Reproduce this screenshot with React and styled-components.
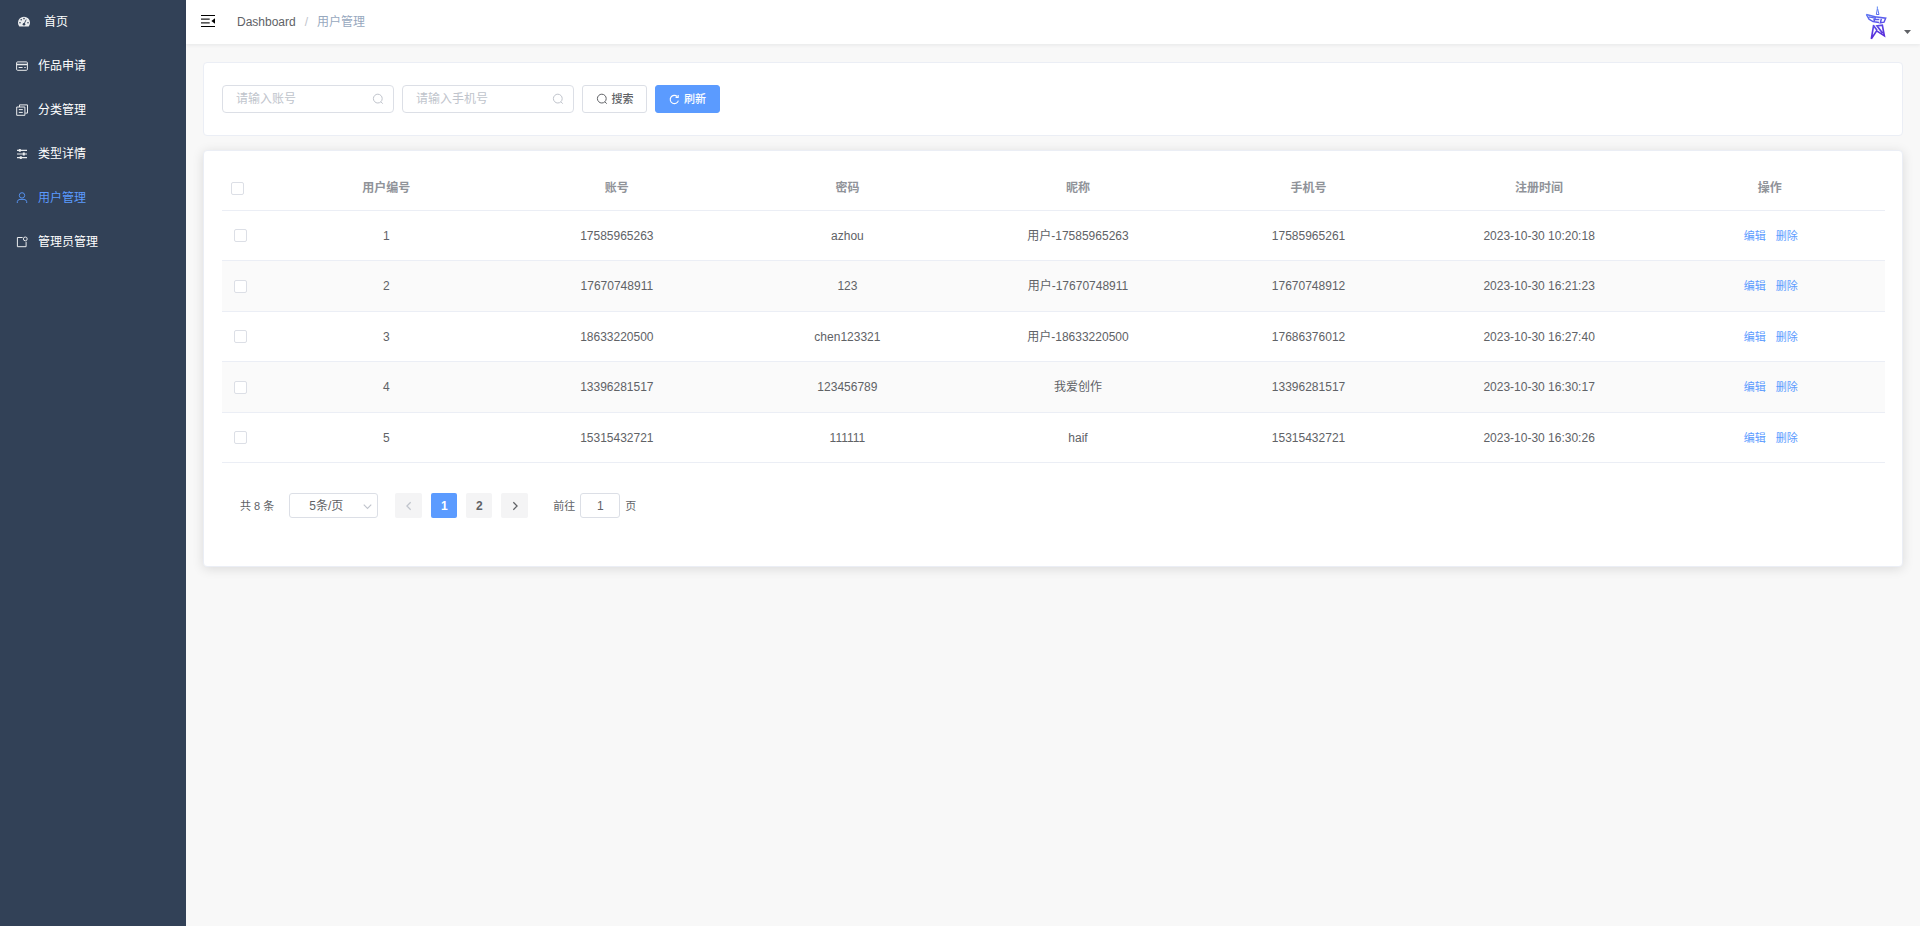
import React, { useState } from 'react';
import styled, { createGlobalStyle, css } from 'styled-components';

const GlobalStyle = createGlobalStyle`
  * {
    box-sizing: border-box;
  }
  body {
    margin: 0;
    background: #f8f8f8;
    color: #606266;
    font-family: 'Liberation Sans', 'Noto Sans CJK SC', sans-serif;
    font-size: 12px;
    line-height: 16px;
  }
  button, input, select {
    font-family: inherit;
    line-height: inherit;
  }
`;

const Layout = styled.div`
  display: flex;
  min-height: 100vh;
`;

const Sidebar = styled.nav`
  flex: none;
  width: 186px;
  background: #324157;
`;

const MenuItem = styled.a`
  display: flex;
  align-items: center;
  gap: ${({ $home }) => ($home ? '14px' : '10px')};
  height: 44px;
  padding-left: ${({ $home }) => ($home ? '18px' : '16px')};
  color: ${({ $active }) => ($active ? '#5b9bff' : '#fff')};
  text-decoration: none;

  svg {
    flex: none;
    opacity: 0.9;
  }
`;

const Main = styled.div`
  flex: 1;
  min-width: 0;
`;

const Header = styled.header`
  display: flex;
  align-items: center;
  height: 44px;
  padding: 0 9px 0 15px;
  background: #fff;
  box-shadow: 0 1px 4px rgba(0, 21, 41, 0.08);
`;

const IconButton = styled.button`
  display: flex;
  align-items: center;
  padding: 0;
  border: 0;
  background: none;
  cursor: pointer;
`;

const Breadcrumb = styled.div`
  display: flex;
  flex: 1;
  align-items: baseline;
  gap: 9px;
  margin-left: 22px;

  a {
    color: #606266;
    text-decoration: none;
  }
  i {
    color: #c0c4cc;
    font-style: normal;
  }
  span {
    color: #97a8be;
  }
`;

const UserMenu = styled(IconButton)`
  align-items: flex-end;
  gap: 17px;
  padding-top: 2px;
`;

const CaretWrap = styled.span`
  display: flex;
  padding-bottom: 7px;
`;

const Content = styled.main`
  display: flex;
  flex-direction: column;
  gap: 14px;
  padding: 18px 17px;
`;

const Card = styled.section`
  border: 1px solid #ebeef5;
  border-radius: 4px;
  background: #fff;
`;

const SearchCard = styled(Card)`
  padding: 22px 18px;
`;

const TableCard = styled(Card)`
  padding: 18px 17px 48px 18px;
  box-shadow: 0 2px 12px rgba(0, 0, 0, 0.12);
`;

const SearchForm = styled.form`
  display: flex;
  gap: 8px;
`;

const SearchBox = styled.label`
  display: flex;
  align-items: center;
  width: 172px;
  height: 28px;
  padding: 0 9px 0 13px;
  border: 1px solid #dcdfe6;
  border-radius: 4px;
  color: #c0c4cc;

  input {
    flex: 1;
    min-width: 0;
    padding: 0;
    border: 0;
    outline: 0;
    color: #606266;
    font-size: 12px;
  }
  input::placeholder {
    color: #c0c4cc;
  }
`;

const Button = styled.button`
  display: flex;
  align-items: center;
  justify-content: center;
  gap: 4px;
  width: 65px;
  height: 28px;
  padding: 0;
  border: 1px solid #dcdfe6;
  border-radius: 3px;
  background: #fff;
  color: #606266;
  font-size: 11px;
  font-weight: 500;
  cursor: pointer;

  ${({ $primary }) => $primary && css`
    border-color: #5b9bff;
    background: #5b9bff;
    color: #fff;
  `}
`;

const Table = styled.table`
  width: 100%;
  table-layout: fixed;
  border-collapse: separate;
  border-spacing: 0;
  text-align: center;

  th, td {
    padding: 0;
    border-bottom: 1px solid #ebeef5;
  }
  th {
    height: 42px;
    padding-bottom: 3px;
    color: #909399;
    font-weight: 700;
  }
  td {
    height: 50px;
  }
  tbody tr:nth-child(even) {
    background: #fafafa;

    td {
      height: 51px;
    }
  }
`;

const CheckCol = styled.col`
  width: 49px;
`;

const CheckWrap = styled.div`
  display: flex;
  padding-left: ${({ $head }) => ($head ? '9px' : '12px')};
`;

const Checkbox = styled.input`
  appearance: none;
  width: 13px;
  height: 13px;
  margin: 0;
  border: 1px solid #dcdfe6;
  border-radius: 2px;
  background: #fff;

  &:checked {
    border-color: #5b9bff;
    background: #5b9bff;
  }
`;

const Actions = styled.div`
  display: flex;
  justify-content: center;
  gap: 10px;
  padding-left: 2px;
`;

const TextButton = styled.button`
  padding: 0;
  border: 0;
  background: none;
  color: #5b9bff;
  font-size: 11px;
  cursor: pointer;
`;

const Pagination = styled.div`
  display: flex;
  align-items: center;
  padding: 30px 18px 0;
  font-size: 11px;
`;

const SizeSelect = styled.div`
  position: relative;
  width: 89px;
  height: 25px;
  margin: 0 17px 0 15px;

  select {
    appearance: none;
    width: 100%;
    height: 100%;
    padding: 0 20px 0 19px;
    border: 1px solid #dcdfe6;
    border-radius: 3px;
    background: #fff;
    color: #606266;
    font-size: 12px;
  }
  svg {
    position: absolute;
    top: 9px;
    right: 6px;
    color: #c0c4cc;
    pointer-events: none;
  }
`;

const Pager = styled.div`
  display: flex;
  gap: 9px;
  margin-right: 25px;
`;

const PageButton = styled.button`
  display: flex;
  align-items: center;
  justify-content: center;
  width: ${({ $arrow }) => ($arrow ? '27px' : '26px')};
  height: 25px;
  padding: 0;
  border: 0;
  border-radius: 2px;
  background: ${({ $active }) => ($active ? '#5b9bff' : '#f4f4f5')};
  color: ${({ $active }) => ($active ? '#fff' : '#606266')};
  font-size: 12px;
  font-weight: 700;
  cursor: pointer;

  &:disabled {
    color: #c0c4cc;
  }
`;

const Jumper = styled.label`
  display: flex;
  align-items: center;
  gap: 5px;

  input {
    width: 40px;
    height: 25px;
    padding: 0;
    border: 1px solid #dcdfe6;
    border-radius: 3px;
    color: #606266;
    font-size: 12px;
    text-align: center;
  }
`;

const Svg = ({ size = 12, children }) => (
  <svg width={size} height={size} viewBox='0 0 12 12' fill='none' stroke='currentColor' aria-hidden='true'>
    {children}
  </svg>
);

const DashboardIcon = () => (
  <svg width='12' height='12' viewBox='0 0 12 12' aria-hidden='true'>
    <path d='M1.3 10.4A6 6 0 1 1 10.7 10.4Z' fill='#fff' />
    <g fill='#324157'>
      <circle cx='2' cy='6.8' r='.8' />
      <circle cx='3.2' cy='3.8' r='.8' />
      <circle cx='6' cy='2.6' r='.8' />
      <circle cx='10' cy='6.8' r='.8' />
      <circle cx='6' cy='8.2' r='1.3' />
    </g>
    <path d='M6 8.2 8.2 3.6' stroke='#324157' strokeWidth='.9' />
  </svg>
);

const CardIcon = () => (
  <Svg>
    <rect x='.6' y='1.9' width='10.8' height='8.4' rx='1' />
    <path d='M.6 4.5h10.8' strokeWidth='1.5' />
    <path d='M2.6 7.5h4M8.3 7.5h1.4' />
  </Svg>
);

const CopyIcon = () => (
  <Svg>
    <path d='M3.5 3V.9h8v8.2H9.3' />
    <path d='M.7 3h8.2v8.3H.7zM2.8 5.6h4M2.8 8.4h4' />
  </Svg>
);

const OperationIcon = () => (
  <Svg>
    <path d='M1 2.4h10M1 6h10M1 9.6h10' strokeWidth='1.1' />
    <path d='M3.8 1v2.8M7.8 4.6v2.8M4.8 8.2v2.8' strokeWidth='2' />
  </Svg>
);

const UserIcon = () => (
  <Svg>
    <circle cx='6' cy='3.4' r='2.7' />
    <path d='M1.3 11V9.6Q1.6 7.6 4 7.4h4q2.4.2 2.7 2.2V11' />
  </Svg>
);

const BadgeIcon = () => (
  <Svg>
    <path d='M6.6 1.5H1.4v9.2h8.7V5.7' />
    <circle cx='9.3' cy='2.9' r='1.9' />
  </Svg>
);

const SearchIcon = () => (
  <Svg>
    <circle cx='5.8' cy='5.6' r='4.4' />
    <path d='m9 8.9 1.7 1.8' />
  </Svg>
);

const RefreshIcon = () => (
  <Svg size={11}>
    <path d='M10.2 7.2A4.5 4.5 0 1 1 9 2.8' strokeWidth='1.2' />
    <path d='M10 1v2.7H7.2' strokeWidth='1.2' />
  </Svg>
);

const FoldIcon = () => (
  <svg width='14' height='14' viewBox='0 0 14 14' fill='none' stroke='#000' aria-hidden='true'>
    <path d='M0 .5h14M0 11.5h14' strokeWidth='1.2' />
    <path d='M0 4.2h8.7M0 7.8h8.7' strokeWidth='1.3' stroke='#222' />
    <path d='M14 3.2v5.6L10.4 6Z' fill='#000' stroke='none' />
  </svg>
);

const Logo = () => (
  <svg width='22' height='35' viewBox='255 18 66 104' fill='none' aria-hidden='true'>
    <defs>
      <linearGradient id='logo' gradientUnits='userSpaceOnUse' x1='275' y1='25' x2='295' y2='115'>
        <stop offset='0' stopColor='#5c86f5' />
        <stop offset='.5' stopColor='#5a50ea' />
        <stop offset='1' stopColor='#5a28d8' />
      </linearGradient>
    </defs>
    <g stroke='url(#logo)' strokeWidth='4.5'>
      <path d='M292 19v7l-3 17h8l-4-17' strokeWidth='3' />
      <path d='M259 43 285 50 317 54 312 66 301 68 304 56' />
      <path d='M259 43 267 57 279 64 297 67M266 50l20 4M287 49l-5 16M280 58h18' strokeWidth='4' />
      <path d='M281 74 274 116 290 92 313 107 307 75 291 77 308 99M281 77l10 13' strokeWidth='5' />
    </g>
  </svg>
);

const Caret = () => (
  <svg width='7' height='4' viewBox='0 0 7 4' aria-hidden='true'>
    <path d='M0 0h7L3.5 4Z' fill='#606266' />
  </svg>
);

const ArrowIcon = ({ d, size }) => (
  <Svg size={size}>
    <path d={d} strokeWidth='1.5' />
  </Svg>
);

const menus = [
  { title: '首页', icon: <DashboardIcon />, home: true },
  { title: '作品申请', icon: <CardIcon /> },
  { title: '分类管理', icon: <CopyIcon /> },
  { title: '类型详情', icon: <OperationIcon /> },
  { title: '用户管理', icon: <UserIcon />, active: true },
  { title: '管理员管理', icon: <BadgeIcon /> },
];

const columns = ['用户编号', '账号', '密码', '昵称', '手机号', '注册时间', '操作'];

const users = [
  { id: 1, account: '17585965263', password: 'azhou', nickname: '用户-17585965263', phone: '17585965261', time: '2023-10-30 10:20:18' },
  { id: 2, account: '17670748911', password: '123', nickname: '用户-17670748911', phone: '17670748912', time: '2023-10-30 16:21:23' },
  { id: 3, account: '18633220500', password: 'chen123321', nickname: '用户-18633220500', phone: '17686376012', time: '2023-10-30 16:27:40' },
  { id: 4, account: '13396281517', password: '123456789', nickname: '我爱创作', phone: '13396281517', time: '2023-10-30 16:30:17' },
  { id: 5, account: '15315432721', password: '111111', nickname: 'haif', phone: '15315432721', time: '2023-10-30 16:30:26' },
];

const App = () => {
  const [selected, setSelected] = useState([]);
  const [page, setPage] = useState(1);

  const toggleAll = () => setSelected(selected.length === users.length ? [] : users.map((u) => u.id));

  const toggle = (id) =>
    setSelected(selected.includes(id) ? selected.filter((s) => s !== id) : [...selected, id]);

  return (
    <>
      <GlobalStyle />
      <Layout>
        <Sidebar>
          {menus.map((item) => (
            <MenuItem href='#' key={item.title} $home={item.home} $active={item.active}>
              {item.icon}
              <span>{item.title}</span>
            </MenuItem>
          ))}
        </Sidebar>
        <Main>
          <Header>
            <IconButton type='button' aria-label='折叠菜单'>
              <FoldIcon />
            </IconButton>
            <Breadcrumb>
              <a href='#'>Dashboard</a>
              <i>/</i>
              <span>用户管理</span>
            </Breadcrumb>
            <UserMenu type='button' aria-label='个人中心'>
              <Logo />
              <CaretWrap>
                <Caret />
              </CaretWrap>
            </UserMenu>
          </Header>
          <Content>
            <SearchCard>
              <SearchForm onSubmit={(e) => e.preventDefault()}>
                <SearchBox>
                  <input type='text' placeholder='请输入账号' aria-label='账号' />
                  <SearchIcon />
                </SearchBox>
                <SearchBox>
                  <input type='text' placeholder='请输入手机号' aria-label='手机号' />
                  <SearchIcon />
                </SearchBox>
                <Button type='submit'>
                  <SearchIcon />
                  搜索
                </Button>
                <Button type='button' $primary>
                  <RefreshIcon />
                  刷新
                </Button>
              </SearchForm>
            </SearchCard>
            <TableCard>
              <Table>
                <colgroup>
                  <CheckCol />
                  {columns.map((c) => <col key={c} />)}
                </colgroup>
                <thead>
                  <tr>
                    <th>
                      <CheckWrap $head>
                        <Checkbox
                          type='checkbox'
                          aria-label='全选'
                          checked={selected.length === users.length}
                          onChange={toggleAll}
                        />
                      </CheckWrap>
                    </th>
                    {columns.map((c) => <th key={c}>{c}</th>)}
                  </tr>
                </thead>
                <tbody>
                  {users.map((user) => (
                    <tr key={user.id}>
                      <td>
                        <CheckWrap>
                          <Checkbox
                            type='checkbox'
                            aria-label={`选择 ${user.id}`}
                            checked={selected.includes(user.id)}
                            onChange={() => toggle(user.id)}
                          />
                        </CheckWrap>
                      </td>
                      <td>{user.id}</td>
                      <td>{user.account}</td>
                      <td>{user.password}</td>
                      <td>{user.nickname}</td>
                      <td>{user.phone}</td>
                      <td>{user.time}</td>
                      <td>
                        <Actions>
                          <TextButton type='button'>编辑</TextButton>
                          <TextButton type='button'>删除</TextButton>
                        </Actions>
                      </td>
                    </tr>
                  ))}
                </tbody>
              </Table>
              <Pagination>
                <span>共 8 条</span>
                <SizeSelect>
                  <select aria-label='每页条数' defaultValue='5'>
                    <option value='5'>5条/页</option>
                    <option value='10'>10条/页</option>
                  </select>
                  <ArrowIcon size={9} d='M1 3.5 6 8.5 11 3.5' />
                </SizeSelect>
                <Pager>
                  <PageButton type='button' $arrow aria-label='上一页' disabled={page === 1} onClick={() => setPage(1)}>
                    <ArrowIcon size={10} d='M8 1.5 3.5 6 8 10.5' />
                  </PageButton>
                  {[1, 2].map((n) => (
                    <PageButton type='button' key={n} $active={page === n} onClick={() => setPage(n)}>
                      {n}
                    </PageButton>
                  ))}
                  <PageButton type='button' $arrow aria-label='下一页' disabled={page === 2} onClick={() => setPage(2)}>
                    <ArrowIcon size={10} d='M4 1.5 8.5 6 4 10.5' />
                  </PageButton>
                </Pager>
                <Jumper>
                  前往
                  <input type='text' value={page} onChange={(e) => setPage(Number(e.target.value) || 1)} />
                  页
                </Jumper>
              </Pagination>
            </TableCard>
          </Content>
        </Main>
      </Layout>
    </>
  );
};

export default App;
